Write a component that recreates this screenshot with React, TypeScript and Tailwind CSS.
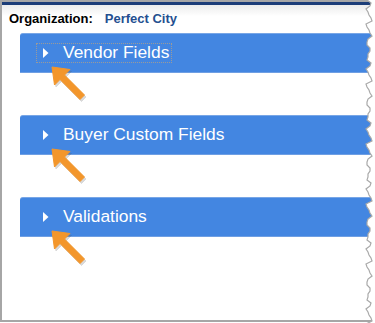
import React from "react";

const sections = ["Vendor Fields", "Buyer Custom Fields", "Validations"];

function Arrow() {
  const d = "M3 3 L21 5.5 L15.5 11 L35.5 31 L31 35.5 L11 15.5 L5.5 21 Z";
  return (
    <svg
      className="pointer-events-none absolute left-[29px] top-[31px]"
      width="42"
      height="42"
      viewBox="0 0 42 42"
    >
      <g transform="translate(1.5 2)" opacity="0.22">
        <path d={d} fill="#555" strokeLinejoin="round" stroke="#555" strokeWidth="1" />
      </g>
      <path d={d} fill="#f3962b" stroke="#f3962b" strokeWidth="1" strokeLinejoin="round" />
    </svg>
  );
}

function TornEdge() {
  const pts: string[] = [];
  const xs = [367, 370, 368, 371, 366, 369, 372, 367, 370, 368];
  for (let y = 0, i = 0; y <= 326; y += 6, i++) {
    pts.push(`${xs[i % xs.length] - 360},${y}`);
    pts.push(`${xs[(i + 3) % xs.length] - 360},${y + 3}`);
  }
  const line = pts.join(" ");
  return (
    <svg className="pointer-events-none absolute right-0 top-0" width="15" height="323" viewBox="0 0 15 323">
      <polygon points={`${line} 15,326 15,0`} fill="#ffffff" />
      <polyline points={line} fill="none" stroke="#a9a9a9" strokeWidth="1.2" />
    </svg>
  );
}

export default function App() {
  return (
    <div className="relative h-[323px] w-[375px] overflow-hidden bg-white font-['Liberation_Sans',Arial,sans-serif]">
      <div className="h-[322px] w-[373px] border-b-2 border-l-2 border-t-2 border-[#a6a6a6]">
        <div className="h-[3px] bg-[#1c3d78]" />
        <div className="flex h-[28px] items-center bg-gradient-to-b from-[#ececec] to-white to-40% pl-[7px] text-[13px] font-bold">
          <span className="text-black">Organization:</span>
          <span className="ml-[12px] text-[#244f90]">Perfect City</span>
        </div>
        <div className="flex flex-col gap-[42px]">
          {sections.map((s, i) => (
            <div key={s} className="relative ml-[18px] w-[352px]">
              <div className="flex h-[40px] items-center rounded-tl-[3px] border-b border-t border-b-[#6f9fe3] border-t-[#78a6e6] bg-[#4386e1] text-white">
                <div
                  className={
                    "ml-[17px] flex h-[18px] items-center pl-[6px] pr-[2px] " +
                    (i === 0 ? "outline outline-1 outline-dotted outline-[#9a9a9a]" : "")
                  }
                >
                  <svg width="6" height="10" viewBox="0 0 6 10">
                    <path d="M0 0 L5.5 5 L0 10 Z" fill="#ffffff" />
                  </svg>
                  <span className="ml-[14px] text-[17.4px] leading-none">{s}</span>
                </div>
              </div>
              <Arrow />
            </div>
          ))}
        </div>
      </div>
      <TornEdge />
    </div>
  );
}
